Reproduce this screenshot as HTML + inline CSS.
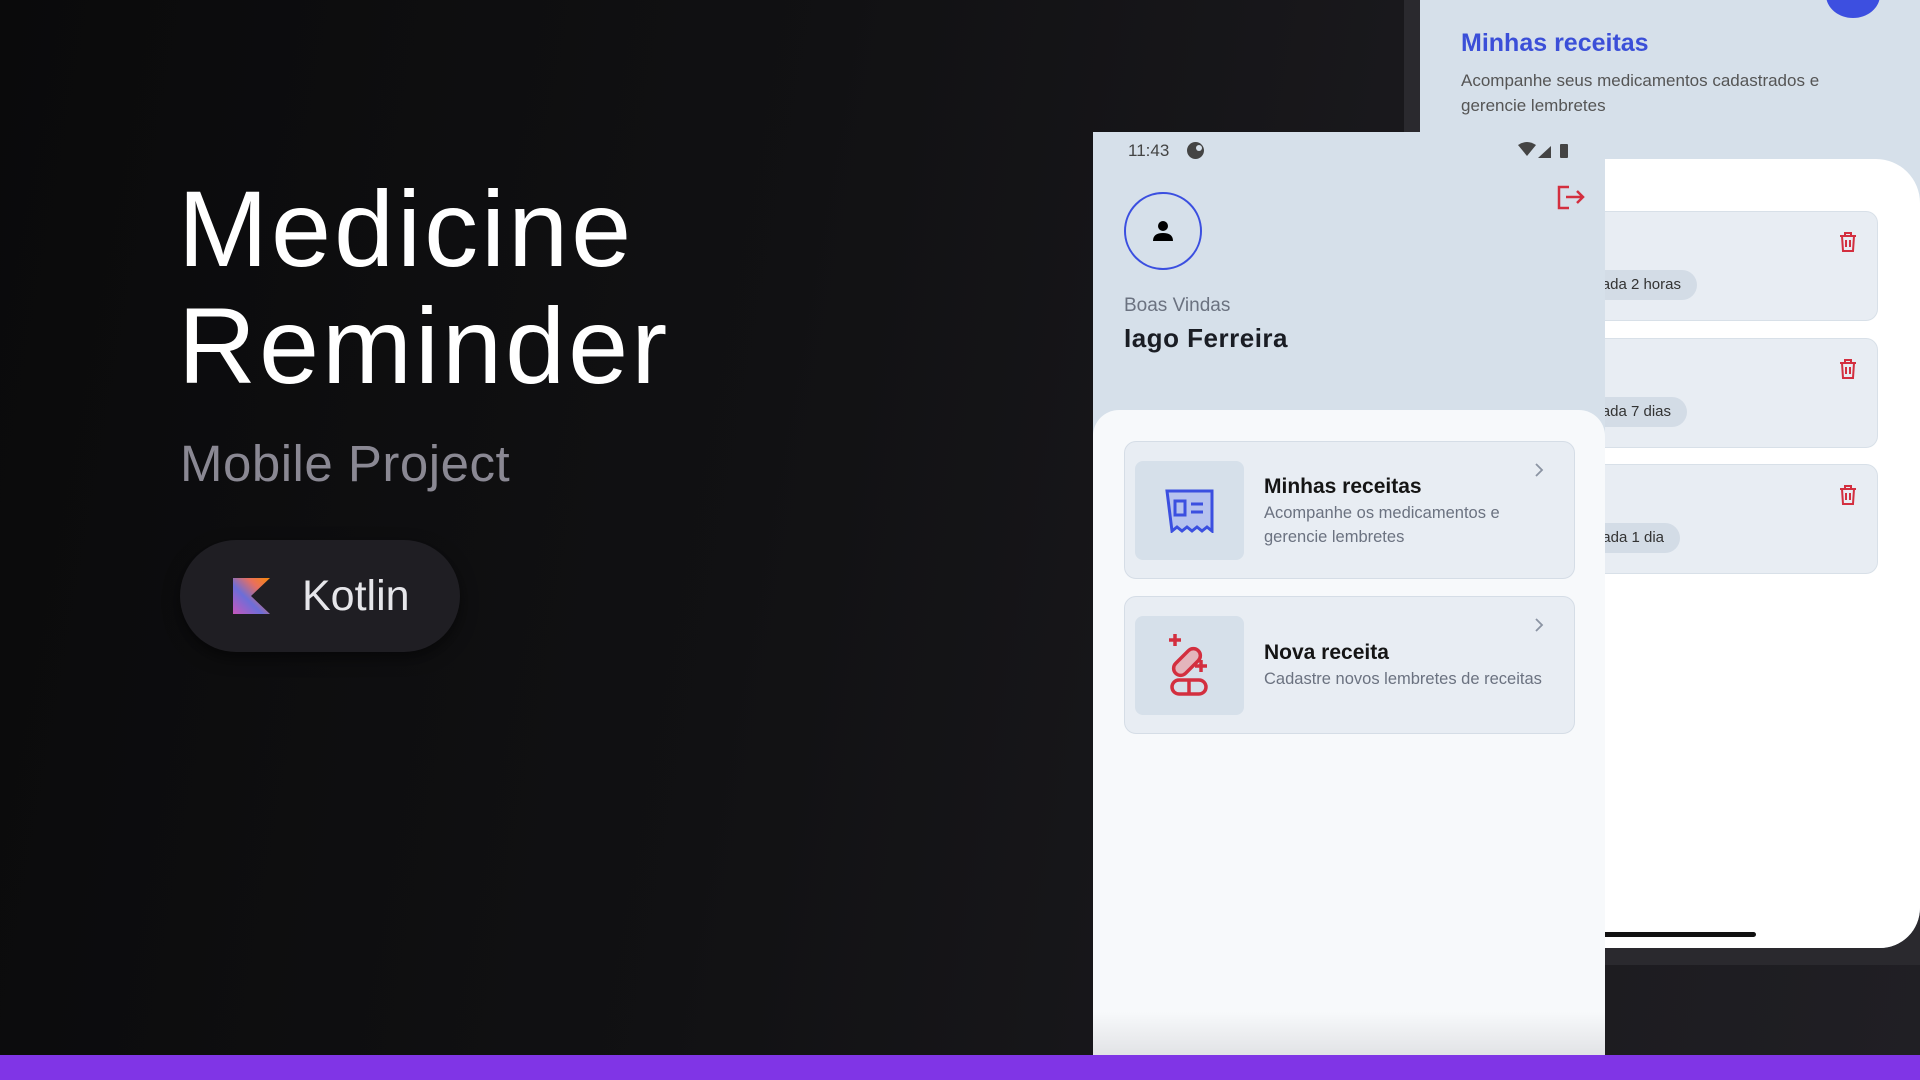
<!DOCTYPE html>
<html><head><meta charset="utf-8"><style>
*{margin:0;padding:0;box-sizing:border-box}
body{width:1920px;height:1080px;overflow:hidden;position:relative;background:linear-gradient(100deg,#0a0a0b 0%,#111113 40%,#1a191d 70%,#201f24 100%);font-family:"Liberation Sans",sans-serif}
.abs{position:absolute}
.title{left:178px;top:170px;color:#fff;font-size:108px;line-height:117px;letter-spacing:3px}
.sub{left:180px;top:434px;color:#8a8893;font-size:51px;letter-spacing:.5px}
.pill{left:180px;top:540px;width:280px;height:112px;border-radius:56px;background:#1f1e23;box-shadow:0 6px 16px rgba(0,0,0,.5)}
.pill span{position:absolute;left:122px;top:32px;font-size:43px;color:#e6e6ea}
.back{left:1404px;top:0;width:516px;height:965px;background:#2a292e}
.bscreen{left:1420px;top:0;width:500px;height:948px;background:#d6e0ea;border-bottom-right-radius:40px;overflow:hidden}
.bwhite{left:0;top:159px;width:500px;height:789px;background:#fff;border-top-right-radius:44px;border-bottom-right-radius:40px}
.bcard{left:-120px;width:578px;height:110px;background:#e8edf3;border:1px solid #d8e0e8;border-radius:12px}
.tag{position:absolute;top:58px;height:30px;border-radius:15px;background:#d3dce6;font-size:15px;color:#333;line-height:30px;padding:0 16px 0 60px}
.front{left:1093px;top:132px;width:512px;height:923px;background:#d6e0ea;overflow:hidden}
.fwhite{left:0;top:278px;width:512px;height:700px;background:#f7f9fb;border-radius:26px 26px 0 0}
.card{left:31px;width:451px;height:138px;background:#e8edf3;border:1.5px solid #d5dde6;border-radius:12px}
.ib{position:absolute;left:10px;top:19px;width:109px;height:99px;background:#d6e0ea;border-radius:8px}
.ct{position:absolute;left:139px;font-weight:bold;font-size:21px;color:#151515}
.cd{position:absolute;left:139px;font-size:16.5px;color:#6b7280;line-height:24px}
</style></head><body>
<div class="abs title">Medicine<br>Reminder</div>
<div class="abs sub">Mobile Project</div>
<div class="abs pill">
<svg class="abs" style="left:53px;top:38px" width="37" height="36" viewBox="0 0 37 36">
<defs><linearGradient id="k" x1="0" y1="1" x2="1" y2="0"><stop offset="0" stop-color="#c757bc"/><stop offset=".4" stop-color="#6c6ed8"/><stop offset=".7" stop-color="#e86f5f"/><stop offset="1" stop-color="#f88909"/></linearGradient></defs>
<polygon points="0,0 37,0 18,18 37,36 0,36" fill="url(#k)"/></svg>
<span>Kotlin</span></div>

<div class="abs back"></div>
<div class="abs bscreen">
<div class="abs" style="left:406px;top:-28px;width:54px;height:46px;border-radius:50%;background:#3d4fe0"></div>
<div class="abs" style="left:41px;top:29px;font-size:25px;font-weight:bold;color:#3b4fd8">Minhas receitas</div>
<div class="abs" style="left:41px;top:68px;font-size:17px;color:#555;line-height:25px">Acompanhe seus medicamentos cadastrados e<br>gerencie lembretes</div>
<div class="abs bwhite">
<div class="abs bcard" style="top:52px"><div class="tag" style="right:180px">a cada 2 horas</div>
<svg class="abs" style="right:20px;top:20px" width="18" height="20" viewBox="0 0 18 20" fill="none" stroke="#d32f3f" stroke-width="2"><path d="M1 4h16M6 4V1h6v3M3 4l1 15h10l1-15M7 8v7M11 8v7"/></svg></div>
<div class="abs bcard" style="top:179px"><div class="tag" style="right:190px">a cada 7 dias</div>
<svg class="abs" style="right:20px;top:20px" width="18" height="20" viewBox="0 0 18 20" fill="none" stroke="#d32f3f" stroke-width="2"><path d="M1 4h16M6 4V1h6v3M3 4l1 15h10l1-15M7 8v7M11 8v7"/></svg></div>
<div class="abs bcard" style="top:305px"><div class="tag" style="right:197px">a cada 1 dia</div>
<svg class="abs" style="right:20px;top:20px" width="18" height="20" viewBox="0 0 18 20" fill="none" stroke="#d32f3f" stroke-width="2"><path d="M1 4h16M6 4V1h6v3M3 4l1 15h10l1-15M7 8v7M11 8v7"/></svg></div>
<div class="abs" style="left:-140px;top:773px;width:476px;height:5px;background:#111;border-radius:3px"></div>
</div></div>

<div class="abs front">
<div class="abs" style="left:35px;top:9px;font-size:17px;color:#444">11:43</div>
<div class="abs" style="left:94px;top:10px;width:17px;height:17px;border-radius:50%;background:#444"></div>
<div class="abs" style="left:103px;top:13px;width:6px;height:6px;border-radius:50%;background:#d6e0ea"></div>
<svg class="abs" style="left:425px;top:10px" width="58" height="18" viewBox="0 0 58 18"><path d="M0 3Q9-3 18 3L9 14Z" fill="#444"/><path d="M20 16L33 4V16Z" fill="#444"/><rect x="42" y="2" width="8" height="14" rx="1" fill="#444"/></svg>
<svg class="abs" style="left:464px;top:53px" width="28" height="26" viewBox="0 0 28 26" fill="none" stroke="#d32f3f" stroke-width="2.5"><path d="M12 2H2v21h10M9 12h17M20 6l6 6-6 6"/></svg>
<div class="abs" style="left:31px;top:60px;width:78px;height:78px;border-radius:50%;border:2px solid #3b4fe0"></div>
<svg class="abs" style="left:57px;top:86px" width="26" height="26" viewBox="0 0 26 26"><circle cx="13" cy="8" r="5" fill="#000"/><path d="M3 23q0-8 10-8t10 8z" fill="#000"/></svg>
<div class="abs" style="left:31px;top:163px;font-size:19px;color:#6b7280">Boas Vindas</div>
<div class="abs" style="left:31px;top:191px;font-size:26px;font-weight:bold;color:#1a1d24;letter-spacing:.5px">Iago Ferreira</div>
<div class="abs fwhite">
<div class="abs card" style="top:31px"><div class="ib">
<svg class="abs" style="left:30px;top:28px" width="49" height="44" viewBox="0 0 49 44" fill="none" stroke="#3b4fe0" stroke-width="3"><path d="M2 2h45v40l-5-4-5 4-5-4-5 4-5-4-5 4-5-4-5 4z" fill="#b6c2ee"/><rect x="10" y="12" width="10" height="14"/><path d="M26 15h12M26 23h12"/></svg></div>
<div class="ct" style="top:33px">Minhas receitas</div>
<div class="cd" style="top:59px">Acompanhe os medicamentos e<br>gerencie lembretes</div>
<svg class="abs" style="left:409px;top:20px" width="10" height="16" viewBox="0 0 10 16" fill="none" stroke="#8b94a3" stroke-width="1.8"><path d="M2 2l6 6-6 6"/></svg></div>
<div class="abs card" style="top:186px"><div class="ib">
<svg class="abs" style="left:34px;top:18px" width="42" height="62" viewBox="0 0 42 62" fill="none" stroke="#d32f3f" stroke-width="3.5"><path d="M6 0v12M0 6h12M32 26v12M26 32h12"/><rect x="11" y="12" width="14" height="32" rx="7" transform="rotate(45 18 28)" fill="#e3b5bc"/><rect x="3" y="46" width="34" height="14" rx="7"/><path d="M20 46v14"/></svg></div>
<div class="ct" style="top:44px">Nova receita</div>
<div class="cd" style="top:70px">Cadastre novos lembretes de receitas</div>
<svg class="abs" style="left:409px;top:20px" width="10" height="16" viewBox="0 0 10 16" fill="none" stroke="#8b94a3" stroke-width="1.8"><path d="M2 2l6 6-6 6"/></svg></div>
</div>
<div class="abs" style="left:0;top:880px;width:512px;height:43px;background:linear-gradient(#f7f9fb00,#e2e3e6)"></div>
</div>
<div class="abs" style="left:0;top:1055px;width:1920px;height:25px;background:#8035e6"></div>
</body></html>
